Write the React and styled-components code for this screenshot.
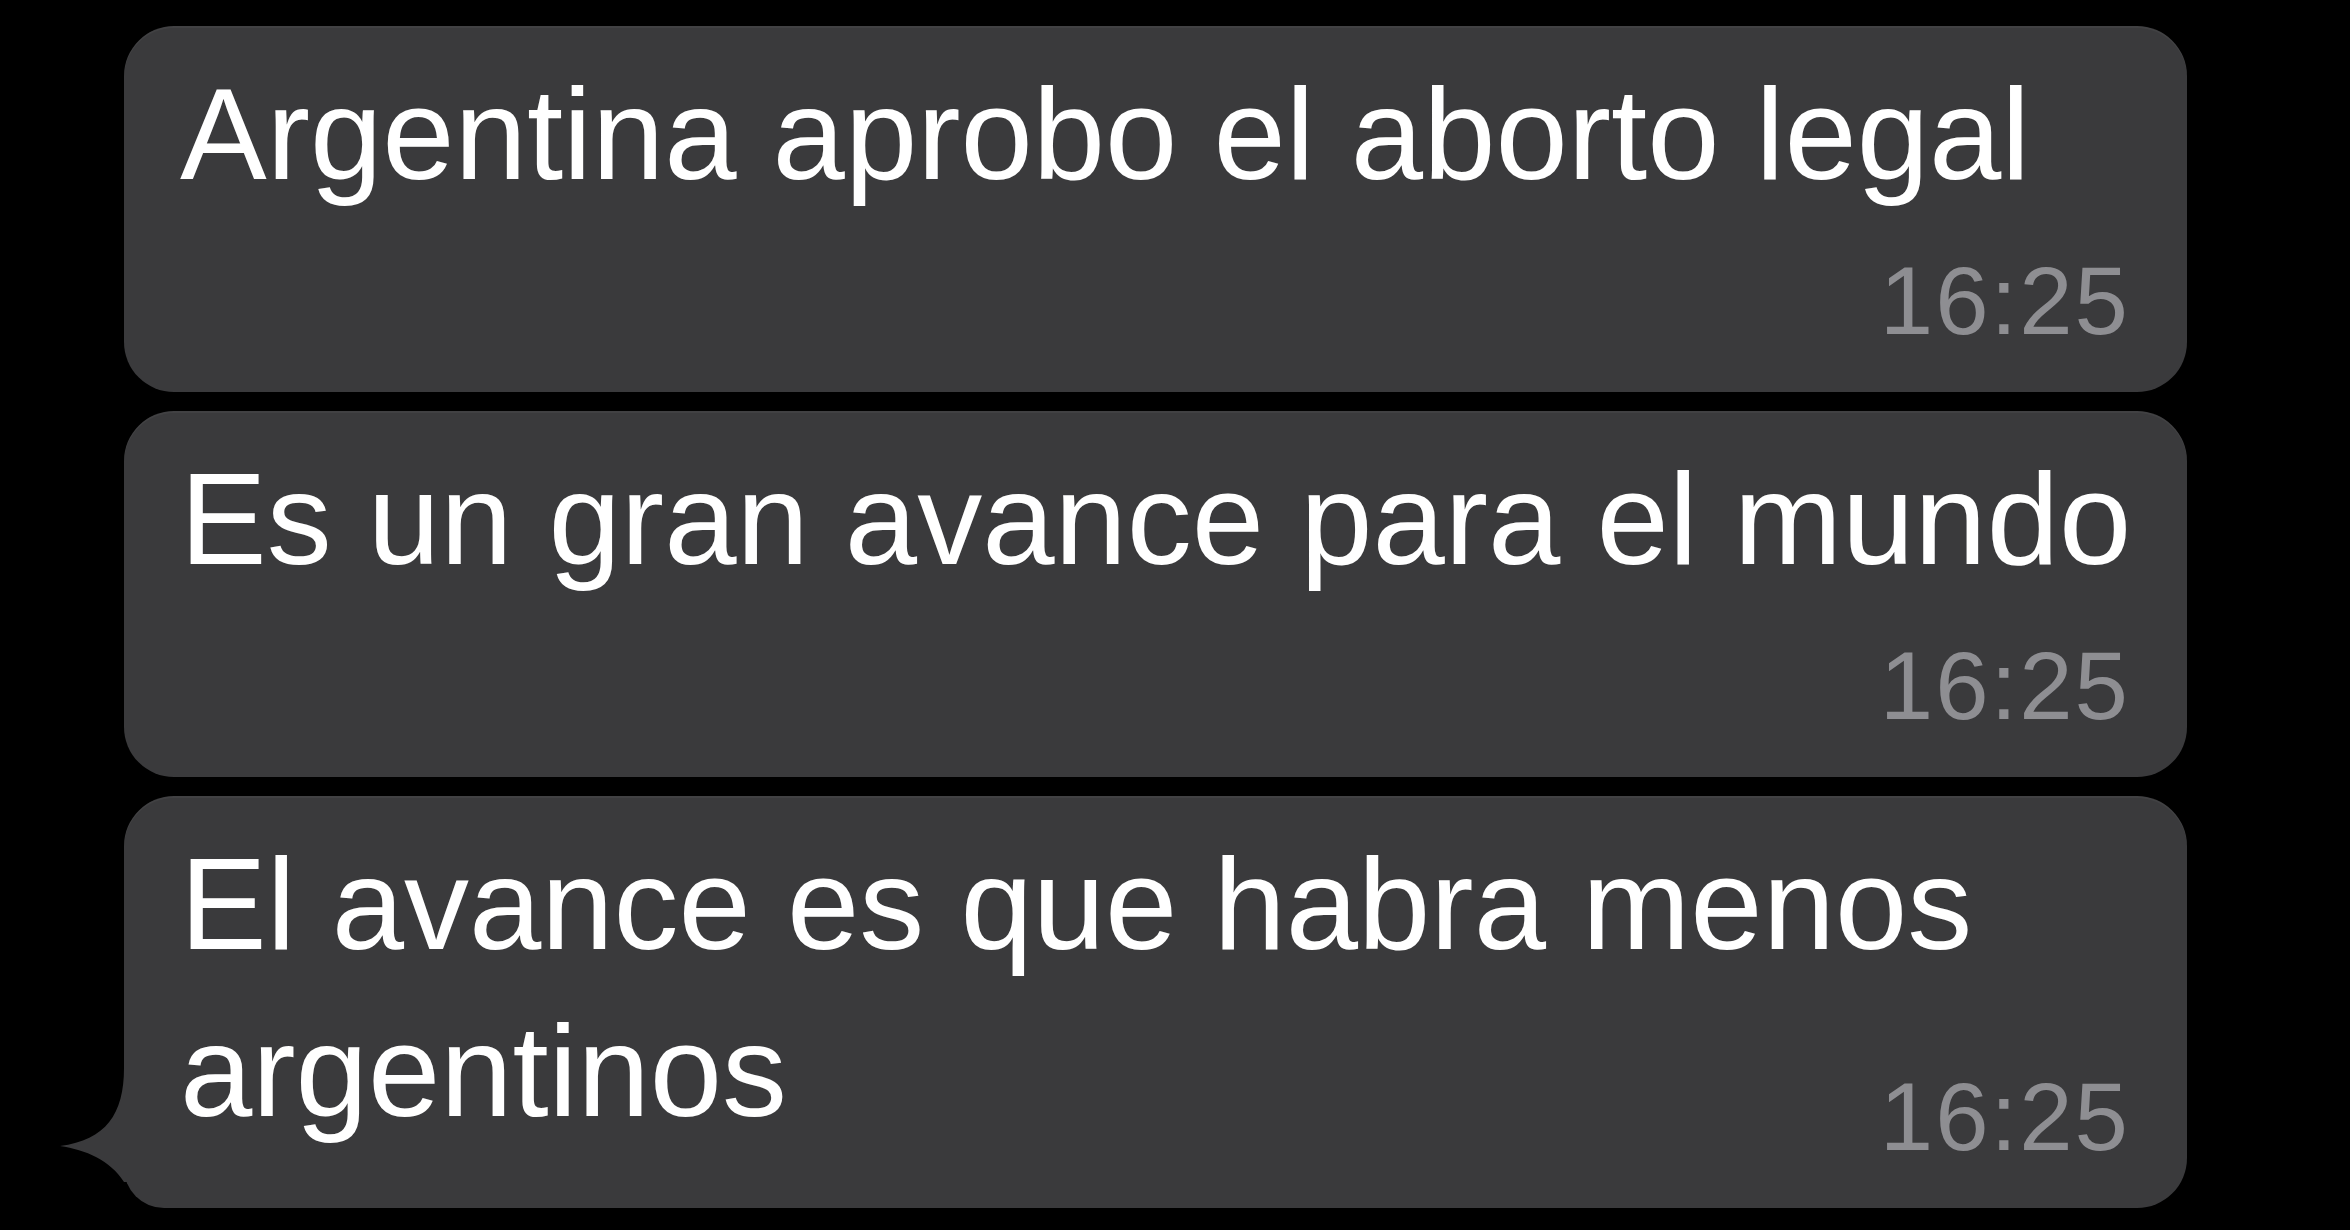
import React from 'react'
import styled, { createGlobalStyle } from 'styled-components'

const GlobalStyle = createGlobalStyle`
    html, body {
        margin: 0;
        padding: 0;
        background: #000;
    }
    body {
        font-family: 'Liberation Sans', Arial, sans-serif;
        -webkit-font-smoothing: antialiased;
    }
`

const Thread = styled.div`
    width: 2350px;
    height: 1230px;
    box-sizing: border-box;
    padding: 26px 163px 0 124px;
    display: flex;
    flex-direction: column;
    gap: 19px;
    overflow: hidden;
`

const Bubble = styled.div`
    position: relative;
    display: flex;
    flex-direction: column;
    background: #3a3a3c;
    border-radius: 50px;
    border-bottom-left-radius: ${(props) => (props.$tail ? '40px' : '50px')};
    padding: 25px 56px 43px 56px;
    box-shadow: inset 0 2px 0 rgba(255, 255, 255, 0.04);
`

const Text = styled.div`
    color: #fff;
    font-size: 130px;
    line-height: 167px;
    white-space: pre;
`

const Time = styled.div`
    align-self: flex-end;
    color: #8e8e92;
    font-size: 96px;
    line-height: 96px;
    letter-spacing: 2px;
    margin-top: ${(props) => (props.$overlap ? '-86px' : '35px')};
    margin-right: 1px;
`

const Tail = styled.svg`
    position: absolute;
    left: -64px;
    bottom: 0;
    width: 110px;
    height: 140px;
    fill: #3a3a3c;
`

const messages = [
    { text: 'Argentina aprobo el aborto legal', time: '16:25' },
    { text: 'Es un gran avance para el mundo', time: '16:25' },
    {
        text: 'El avance es que habra menos\nargentinos',
        time: '16:25',
        overlap: true,
        tail: true,
    },
]

const App = () => {
    return (
        <>
            <GlobalStyle />
            <Thread>
                {messages.map((msg, i) => (
                    <Bubble key={i} $tail={msg.tail}>
                        {msg.tail && (
                            <Tail viewBox='0 0 110 140'>
                                <path d='M64 0 C64 46 46 72 0 78 C26 82 50 92 64 114 L110 114 L110 0 Z' />
                            </Tail>
                        )}
                        <Text>{msg.text}</Text>
                        <Time $overlap={msg.overlap}>{msg.time}</Time>
                    </Bubble>
                ))}
            </Thread>
        </>
    )
}

export default App
